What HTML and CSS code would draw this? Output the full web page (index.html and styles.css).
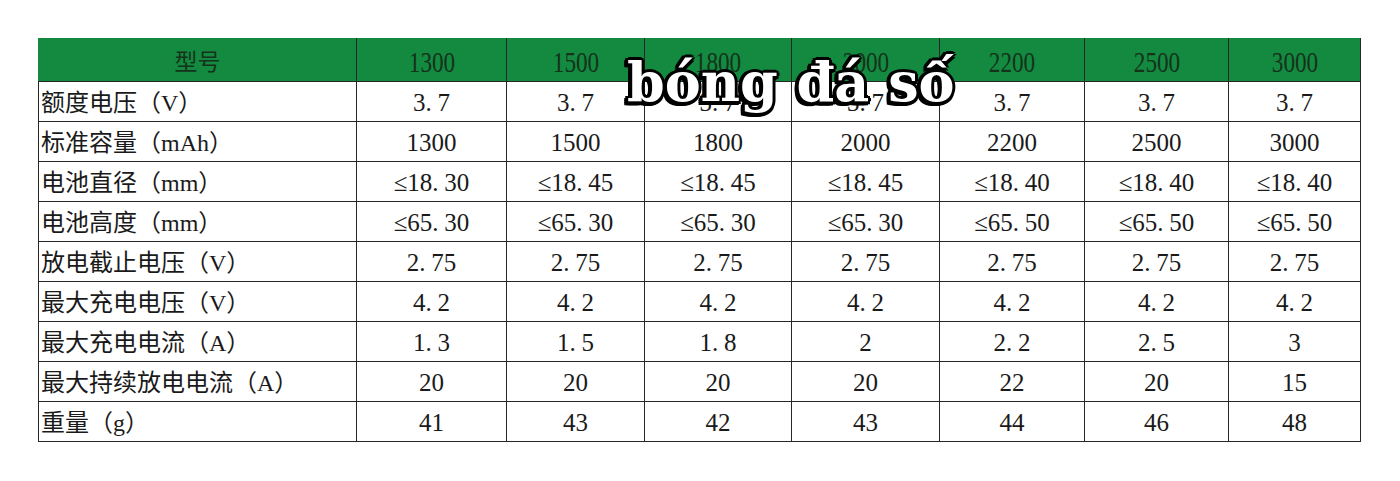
FILE: index.html
```html
<!DOCTYPE html>
<html lang="zh">
<head>
<meta charset="utf-8">
<title>电池规格</title>
<link rel="stylesheet" href="styles.css">
</head>
<body>
<div class="page">
  <table class="spec">
    <colgroup>
      <col class="c-label">
      <col class="c1"><col class="c2"><col class="c3"><col class="c4"><col class="c5"><col class="c6"><col class="c7">
    </colgroup>
    <thead>
      <tr>
        <th class="h-label">型号</th>
        <th><span class="hn">1300</span></th>
        <th><span class="hn">1500</span></th>
        <th><span class="hn">1800</span></th>
        <th><span class="hn">2000</span></th>
        <th><span class="hn">2200</span></th>
        <th><span class="hn">2500</span></th>
        <th><span class="hn">3000</span></th>
      </tr>
    </thead>
    <tbody>
      <tr>
        <td class="lbl">额度电压（V）</td>
        <td>3<span class="dp">.</span>7</td><td>3<span class="dp">.</span>7</td><td>3<span class="dp">.</span>7</td><td>3<span class="dp">.</span>7</td><td>3<span class="dp">.</span>7</td><td>3<span class="dp">.</span>7</td><td>3<span class="dp">.</span>7</td>
      </tr>
      <tr>
        <td class="lbl">标准容量（mAh）</td>
        <td>1300</td><td>1500</td><td>1800</td><td>2000</td><td>2200</td><td>2500</td><td>3000</td>
      </tr>
      <tr>
        <td class="lbl">电池直径（mm）</td>
        <td>≤18<span class="dp">.</span>30</td><td>≤18<span class="dp">.</span>45</td><td>≤18<span class="dp">.</span>45</td><td>≤18<span class="dp">.</span>45</td><td>≤18<span class="dp">.</span>40</td><td>≤18<span class="dp">.</span>40</td><td>≤18<span class="dp">.</span>40</td>
      </tr>
      <tr>
        <td class="lbl">电池高度（mm）</td>
        <td>≤65<span class="dp">.</span>30</td><td>≤65<span class="dp">.</span>30</td><td>≤65<span class="dp">.</span>30</td><td>≤65<span class="dp">.</span>30</td><td>≤65<span class="dp">.</span>50</td><td>≤65<span class="dp">.</span>50</td><td>≤65<span class="dp">.</span>50</td>
      </tr>
      <tr>
        <td class="lbl">放电截止电压（V）</td>
        <td>2<span class="dp">.</span>75</td><td>2<span class="dp">.</span>75</td><td>2<span class="dp">.</span>75</td><td>2<span class="dp">.</span>75</td><td>2<span class="dp">.</span>75</td><td>2<span class="dp">.</span>75</td><td>2<span class="dp">.</span>75</td>
      </tr>
      <tr>
        <td class="lbl">最大充电电压（V）</td>
        <td>4<span class="dp">.</span>2</td><td>4<span class="dp">.</span>2</td><td>4<span class="dp">.</span>2</td><td>4<span class="dp">.</span>2</td><td>4<span class="dp">.</span>2</td><td>4<span class="dp">.</span>2</td><td>4<span class="dp">.</span>2</td>
      </tr>
      <tr>
        <td class="lbl">最大充电电流（A）</td>
        <td>1<span class="dp">.</span>3</td><td>1<span class="dp">.</span>5</td><td>1<span class="dp">.</span>8</td><td>2</td><td>2<span class="dp">.</span>2</td><td>2<span class="dp">.</span>5</td><td>3</td>
      </tr>
      <tr>
        <td class="lbl">最大持续放电电流（A）</td>
        <td>20</td><td>20</td><td>20</td><td>20</td><td>22</td><td>20</td><td>15</td>
      </tr>
      <tr>
        <td class="lbl">重量（g）</td>
        <td>41</td><td>43</td><td>42</td><td>43</td><td>44</td><td>46</td><td>48</td>
      </tr>
    </tbody>
  </table>
  <div class="watermark">bóng đá số</div>
</div>
</body>
</html>
```

FILE: styles.css
```css
html, body {
  margin: 0;
  padding: 0;
  background: #ffffff;
}

.page {
  position: relative;
  padding: 38px 0 0 38px;
}

.spec {
  border-collapse: collapse;
  table-layout: fixed;
  width: 1323px;
  font-family: "Liberation Serif", "Noto Sans CJK SC", serif;
  font-size: 25px;
  color: #1a1a1a;
}

.c-label { width: 318px; }
.c1 { width: 150px; }
.c2 { width: 138px; }
.c3 { width: 147px; }
.c4 { width: 148px; }
.c5 { width: 145px; }
.c6 { width: 144px; }
.c7 { width: 132px; }

.spec th,
.spec td {
  border: 1px solid #262626;
  padding: 0;
  text-align: center;
  vertical-align: middle;
  white-space: nowrap;
  overflow: hidden;
}

.spec thead tr {
  height: 43px;
}

.spec th {
  background: #138a3f;
  color: #15321b;
  font-weight: normal;
  border-top-color: #138a3f;
}

.spec th.h-label {
  font-family: "Noto Sans CJK SC", sans-serif;
  font-size: 23px;
  border-left-color: #138a3f;
}

.hn {
  display: inline-block;
  font-size: 29px;
  line-height: 1;
  transform: scaleX(0.8);
  padding-top: 5px;
}

.spec tbody tr {
  height: 40px;
}

.spec td {
  line-height: 1;
  padding-top: 2px;
}

.spec td.lbl {
  text-align: left;
  padding-left: 2px;
  font-size: 24px;
}

.dp {
  display: inline-block;
  width: 0.48em;
  text-align: left;
}

.watermark {
  position: absolute;
  left: 627px;
  top: 55px;
  font-family: "DejaVu Serif", serif;
  font-weight: bold;
  font-size: 54px;
  line-height: 1;
  color: #ffffff;
  white-space: nowrap;
  text-shadow:
    -4px 0 0 #000, 3px 0 0 #000, 0 -3px 0 #000, 0 4px 0 #000,
    -3px -2px 0 #000, 2px -2px 0 #000, -3px 3px 0 #000, 2px 3px 0 #000,
    -4px 2px 0 #000, -2px 4px 0 #000, -4px 4px 0 #000;
}
```
